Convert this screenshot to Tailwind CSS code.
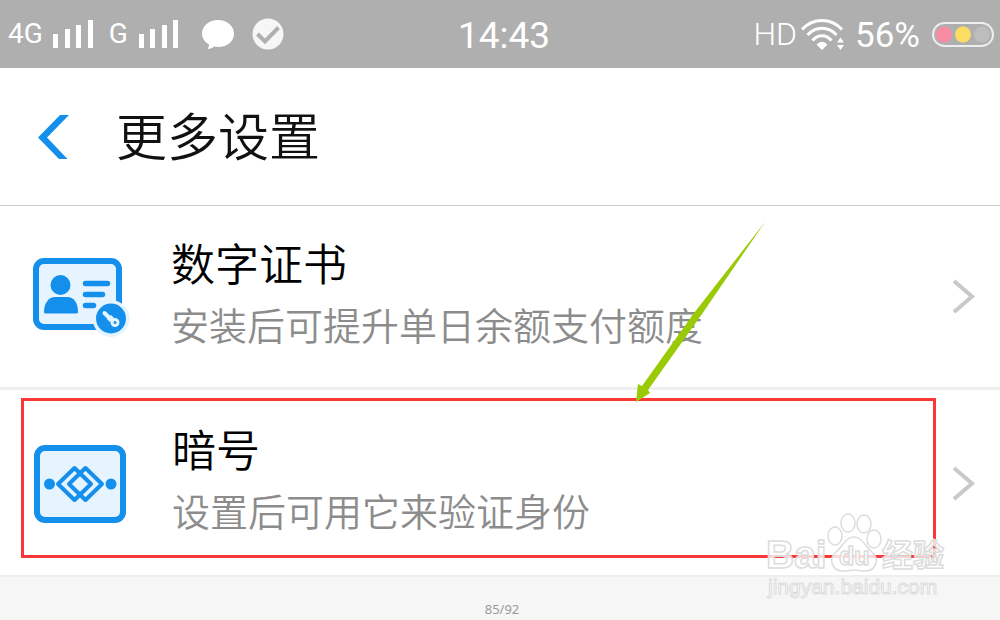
<!DOCTYPE html>
<html lang="zh-CN">
<head>
  <meta charset="UTF-8" />
  <meta name="viewport" content="width=device-width, initial-scale=1.0" />
  <title>更多设置</title>
  <script src="https://cdn.jsdelivr.net/npm/@tailwindcss/browser@4"></script>
</head>
<body class="relative min-h-screen flex flex-col overflow-x-hidden bg-white font-['Noto_Sans_CJK_SC',sans-serif] font-[350]">
  <!-- Status bar -->
  <div class="relative flex h-[68px] items-center justify-between bg-[#afafaf] px-2 font-['Roboto',sans-serif] font-normal text-white">
    <div class="flex items-center">
      <span class="text-[28px]">4G</span>
      <svg class="ml-2 h-[30px] w-[42px]" viewBox="0 0 42 30" fill="#fff">
        <path d="M2 15h5v14H2zM14 10h5v19h-5zM25 6h5v23h-5zM37 1h5v28h-5z" />
      </svg>
      <span class="ml-4 text-[28px]">G</span>
      <svg class="ml-2 h-[30px] w-[42px]" viewBox="0 0 42 30" fill="#fff">
        <path d="M3 15h5v14H3zM14 10h5v19h-5zM26 6h5v23h-5zM37 1h5v28h-5z" />
      </svg>
      <svg class="ml-6 h-[30px] w-8" viewBox="0 0 32 30" fill="#fff">
        <path d="M16 1C7 1 0 7 0 14.500c0 5 3 8.500 7 11 0 2-.5 3-1.500 4.500 3 0 5-1 6.500-2.500C23 29.500 32 24 32 14.500 32 7 25 1 16 1z" />
      </svg>
      <svg class="ml-[18px] h-8 w-8" viewBox="0 0 32 32" fill="none">
        <circle cx="16" cy="16" r="15.500" fill="#f6f6f6" />
        <path d="M5.500 16l7.500 7.500L26.500 9.500" stroke="#afafaf" stroke-width="4" />
      </svg>
    </div>
    <span class="absolute inset-x-0 mt-1 pl-2 text-center text-[37px]">14:43</span>
    <div class="flex items-center">
      <span class="mr-1 text-[32px] font-light">HD</span>
      <svg class="mr-[10px] h-8 w-11" viewBox="0 0 44 32" fill="none" stroke="#fff" stroke-width="3">
        <path d="M1 11.500C12-.5 30-.5 41 11.500M6.500 17C15 8 27 8 35.500 17M11.500 22.500C17 16 25 16 30.500 22.500" />
        <path d="M15.500 26.500Q21 21 26.500 26.500L21 32z" fill="#fff" stroke="none" />
        <path d="M36 24.500l3.500-5 3.500 5zM36 27l3.500 5 3.500-5z" fill="#fff" stroke="none" />
      </svg>
      <span class="mr-3 pt-1 text-[35px]">56%</span>
      <svg class="-mr-1 h-7 w-16" viewBox="0 0 64 28">
        <rect x="1" y="3" width="60" height="23" rx="11.500" fill="none" stroke="#eee" stroke-width="2" />
        <circle cx="12" cy="14.500" r="8" fill="#f78ba3" />
        <circle cx="31" cy="14.500" r="8" fill="#fddc62" />
        <circle cx="50" cy="14.500" r="8" fill="#bdbdbd" />
      </svg>
    </div>
  </div>

  <!-- Header -->
  <header class="flex h-[138px] items-center border-b border-[#ccc] pl-9">
    <button type="button" aria-label="返回" class="mr-[46px]">
      <svg class="h-[46px] w-[34px]" viewBox="0 0 34 46" fill="#158fec">
        <path d="M24 1h9L11 23.500 31.500 45H23L2 23.500z" />
      </svg>
    </button>
    <h1 class="pb-1 text-[51px] leading-none text-[#111]">更多设置</h1>
  </header>

  <main>
    <a href="#" class="flex h-[184px] items-center border-b-3 border-[#eee] pl-8 pr-6">
      <svg class="h-20 w-[100px] shrink-0" viewBox="0 0 100 80" fill="#158fec">
        <rect x="4" y="4" width="83" height="66" rx="8" fill="#e6f4ff" stroke="#158fec" stroke-width="6" />
        <circle cx="28.500" cy="28" r="10" />
        <path d="M12 55c0-9 5-15 11-15h12c7 0 11 6 11 15 0 1-1 1.500-2 1.500H14c-1 0-2-.5-2-1.500z" />
        <path d="M53.500 26.500h22M53.500 37.500h17M53.500 48.500h8" stroke="#158fec" stroke-width="5.500" stroke-linecap="round" />
        <circle cx="79" cy="61.500" r="18.500" fill="#e6f4ff" />
        <circle cx="79" cy="61.500" r="15" />
        <path d="M72.500 56l6 6" stroke="#e6f4ff" stroke-width="4" stroke-linecap="round" />
        <path d="M77 60l3 3" stroke="#e6f4ff" stroke-width="6" />
        <circle cx="83" cy="65.500" r="3" fill="#158fec" stroke="#e6f4ff" stroke-width="3" />
      </svg>
      <div class="ml-[39px] grow pb-2">
        <h2 class="text-[44px] leading-[62px] text-black">数字证书</h2>
        <p class="text-[38px] leading-[62px] text-[#8c8c8c]">安装后可提升单日余额支付额度</p>
      </div>
      <svg class="h-9 w-6 shrink-0" viewBox="0 0 24 36" fill="none" stroke="#c8c9cb" stroke-width="4">
        <path d="M2 2l18 15.500L2 33" />
      </svg>
    </a>

    <a href="#" class="relative flex h-[187px] items-center border-b-2 border-[#eee] pl-8 pr-6">
      <svg class="h-20 w-[100px] shrink-0" viewBox="0 0 100 80" fill="#158fec">
        <rect x="5" y="5" width="86" height="72" rx="8" fill="#e6f4ff" stroke="#158fec" stroke-width="6" />
        <circle cx="17.500" cy="41" r="5.500" />
        <circle cx="79" cy="41" r="5.500" />
        <g fill="none" stroke="#158fec" stroke-width="4" stroke-linejoin="round">
          <path d="M42.500 25L26 41l16.500 16L59 41z" />
          <path d="M53.500 25L37 41l16.500 16L70 41z" />
        </g>
      </svg>
      <div class="ml-10 grow pb-2">
        <h2 class="text-[44px] leading-[62px] text-black">暗号</h2>
        <p class="text-[38px] leading-[62px] text-[#8c8c8c]">设置后可用它来验证身份</p>
      </div>
      <svg class="h-9 w-6 shrink-0" viewBox="0 0 24 36" fill="none" stroke="#c8c9cb" stroke-width="4">
        <path d="M2 3l18 15.500L2 34" />
      </svg>
      <!-- Highlight and pointer -->
      <span class="absolute bottom-[17px] left-[21px] right-16 top-2 border-3 border-[#fb3838]"></span>
      <svg class="absolute bottom-[172px] left-[630px] h-[184px] w-[140px]" viewBox="0 0 140 184" fill="#9aca06">
        <path d="M135 3L64 94 12 167 8 165 6 183 20 174 18 171 72 95z" />
      </svg>
    </a>
  </main>

  <footer class="grow bg-[#f6f6f6] pl-1 pt-6 text-center font-['Noto_Sans',sans-serif] text-[13px] font-normal leading-4 text-[#999]">85/92</footer>

  <!-- Watermark -->
  <svg class="absolute right-[50px] top-[508px] h-24 w-[190px]" viewBox="0 0 190 96" fill="#fff" fill-opacity=".8" stroke="#dcdcdc" stroke-width="1.500" font-family="Liberation Sans, sans-serif" font-weight="700">
    <text x="6" y="60" font-size="39">Bai</text>
    <ellipse cx="75" cy="28" rx="7" ry="9" />
    <ellipse cx="88" cy="15" rx="7" ry="9" />
    <ellipse cx="104" cy="16" rx="7" ry="9" />
    <ellipse cx="114" cy="31" rx="7" ry="9" />
    <path d="M94 29c-8 0-11 9-18 15-8 7-4 19 7 19 5 0 7-1 11-1s6 1 11 1c11 0 15-12 7-19-7-6-10-15-18-15z" />
    <text x="79" y="57" font-size="25">du</text>
    <text x="122" y="58" font-size="31" font-family="Noto Sans CJK SC, sans-serif">经验</text>
    <text x="8" y="86" font-size="21" font-weight="400" stroke-width="1">jingyan.baidu.com</text>
  </svg>
</body>
</html>
